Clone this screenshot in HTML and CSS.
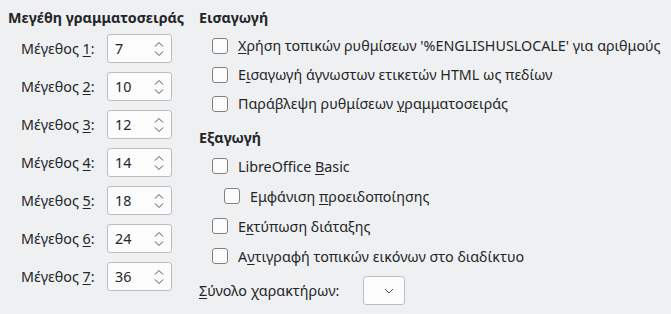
FILE: index.html
```html
<!DOCTYPE html>
<html lang="el">
<head>
	<meta charset="utf-8"/>
	<title>Επιλογές HTML</title>
	<link rel="stylesheet" href="styles.css">
</head>
<body>
	<div class="dialog">
		<section class="sizes">
			<h3 class="title">Μεγέθη γραμματοσειράς</h3>
			<div class="size-grid">
				<label>Μέγεθος <u>1</u>:</label>
				<div class="spin"><span>7</span><svg class="arrows" width="10" height="16" viewBox="0 0 10 16"><path d="M1 5.5 L5 1.5 L9 5.5 M1 10.5 L5 14.5 L9 10.5"/></svg></div>
				<label>Μέγεθος <u>2</u>:</label>
				<div class="spin"><span>10</span><svg class="arrows" width="10" height="16" viewBox="0 0 10 16"><path d="M1 5.5 L5 1.5 L9 5.5 M1 10.5 L5 14.5 L9 10.5"/></svg></div>
				<label>Μέγεθος <u>3</u>:</label>
				<div class="spin"><span>12</span><svg class="arrows" width="10" height="16" viewBox="0 0 10 16"><path d="M1 5.5 L5 1.5 L9 5.5 M1 10.5 L5 14.5 L9 10.5"/></svg></div>
				<label>Μέγεθος <u>4</u>:</label>
				<div class="spin"><span>14</span><svg class="arrows" width="10" height="16" viewBox="0 0 10 16"><path d="M1 5.5 L5 1.5 L9 5.5 M1 10.5 L5 14.5 L9 10.5"/></svg></div>
				<label>Μέγεθος <u>5</u>:</label>
				<div class="spin"><span>18</span><svg class="arrows" width="10" height="16" viewBox="0 0 10 16"><path d="M1 5.5 L5 1.5 L9 5.5 M1 10.5 L5 14.5 L9 10.5"/></svg></div>
				<label>Μέγεθος <u>6</u>:</label>
				<div class="spin"><span>24</span><svg class="arrows" width="10" height="16" viewBox="0 0 10 16"><path d="M1 5.5 L5 1.5 L9 5.5 M1 10.5 L5 14.5 L9 10.5"/></svg></div>
				<label>Μέγεθος <u>7</u>:</label>
				<div class="spin"><span>36</span><svg class="arrows" width="10" height="16" viewBox="0 0 10 16"><path d="M1 5.5 L5 1.5 L9 5.5 M1 10.5 L5 14.5 L9 10.5"/></svg></div>
			</div>
		</section>

		<section class="options">
			<h3 class="title">Εισαγωγή</h3>
			<div class="checks import">
				<div class="check"><span class="box"></span><span><u>Χ</u>ρήση τοπικών ρυθμίσεων '%ENGLISHUSLOCALE' για αριθμούς</span></div>
				<div class="check"><span class="box"></span><span>Ε<u>ι</u>σαγωγή άγνωστων ετικετών HTML ως πεδίων</span></div>
				<div class="check"><span class="box"></span><span>Παράβλεψη ρυθμίσεων <u>γ</u>ραμματοσειράς</span></div>
			</div>
			<h3 class="title export-title">Εξαγωγή</h3>
			<div class="checks export">
				<div class="check"><span class="box"></span><span>LibreOffice <u>B</u>asic</span></div>
				<div class="check nested"><span class="box"></span><span>Εμφάνιση <u>π</u>ροειδοποίησης</span></div>
				<div class="check"><span class="box"></span><span>Ε<u>κ</u>τύπωση διάταξης</span></div>
				<div class="check"><span class="box"></span><span>Α<u>ν</u>τιγραφή τοπικών εικόνων στο διαδίκτυο</span></div>
			</div>
			<div class="charset">
				<label><u>Σ</u>ύνολο χαρακτήρων:</label>
				<div class="combo"><svg width="10" height="6" viewBox="0 0 10 6"><path d="M1 1 L5 5 L9 1"/></svg></div>
			</div>
		</section>
	</div>
</body>
</html>
```

FILE: styles.css
```css
* {
	box-sizing: border-box;
}
body {
	margin: 0;
	background: #eff0f1;
	color: #232629;
	font-family: "Noto Sans", "Open Sans", sans-serif;
	font-size: 14.3px;
}
u {
	text-decoration-thickness: 1px;
	text-underline-offset: 2px;
}
.dialog {
	display: flex;
	gap: 14px;
	padding: 9px 8px;
}
.title {
	margin: 0;
	font-size: 14.3px;
	font-weight: bold;
	line-height: 18px;
	white-space: nowrap;
}
.sizes {
	width: 177px;
}
.size-grid {
	display: grid;
	grid-template-columns: 86px 65px;
	grid-auto-rows: 29px;
	row-gap: 9px;
	margin-top: 7px;
	padding-left: 13px;
	align-items: center;
}
.spin {
	height: 29px;
	display: flex;
	align-items: center;
	justify-content: space-between;
	padding: 0 7px 0 7px;
	background: #fcfcfc;
	border: 1px solid #bcbebf;
	border-radius: 3px;
}
.arrows path, .combo path {
	fill: none;
	stroke: #4d4f52;
	stroke-width: 1;
}
.options {
	flex: 1;
}
.checks {
	display: flex;
	flex-direction: column;
	margin-top: 4px;
}
.check {
	display: flex;
	align-items: center;
	gap: 10px;
	height: 29px;
	padding-left: 13px;
	white-space: nowrap;
}
.export .check {
	height: 30px;
}
.check.nested {
	padding-left: 25px;
}
.box {
	width: 16px;
	height: 16px;
	background: #fcfcfc;
	border: 1px solid #7f8182;
	border-radius: 3px;
	flex: none;
}
.export-title {
	margin-top: 11px;
}
.charset {
	display: flex;
	align-items: center;
	gap: 14px;
	margin-top: 5px;
}
.charset label {
	width: 150px;
}
.combo {
	width: 42px;
	height: 29px;
	display: flex;
	align-items: center;
	justify-content: flex-end;
	padding-right: 10px;
	background: #fcfcfc;
	border: 1px solid #bcbebf;
	border-radius: 3px;
}
```
